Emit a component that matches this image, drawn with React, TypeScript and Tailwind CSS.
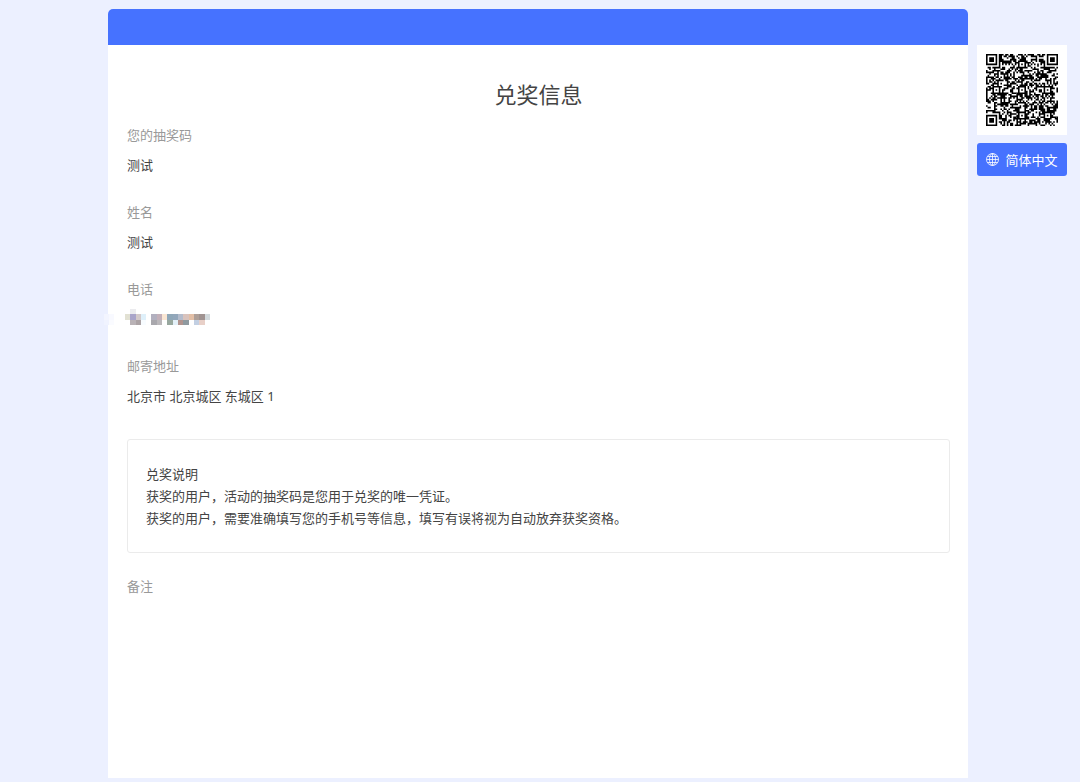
const fields = [
  { label: "您的抽奖码", value: "测试" },
  { label: "姓名", value: "测试" },
  { label: "电话", value: null },
  { label: "邮寄地址", value: "北京市 北京城区 东城区 1" },
];

// Masked phone number, one [column, row, colour] per mosaic block
const mosaic: [number, number, string][] = [
  [1, 0, "#ebebee"],
  [0, 1, "#e2e1d3"], [1, 1, "#a9a4c9"], [2, 1, "#d3c9c9"], [3, 1, "#dff0fa"],
  [1, 2, "#b9b2b6"], [2, 2, "#aba2a4"], [3, 2, "#f8fcff"],
  [5, 1, "#b2b0bf"], [6, 1, "#c3b0b9"], [7, 1, "#fae6d3"], [8, 1, "#8fa7b8"],
  [9, 1, "#93a7bb"], [10, 1, "#b4bccc"], [11, 1, "#d9c3bd"], [12, 1, "#e3bfa6"],
  [13, 1, "#ae9f98"], [14, 1, "#a09391"], [15, 1, "#d2d9dc"],
  [5, 2, "#a9a8ad"], [6, 2, "#bbb8bb"], [8, 2, "#98a89f"], [9, 2, "#e3f0f8"],
  [10, 2, "#b1948f"], [11, 2, "#8f9aa0"], [13, 2, "#c2cfe2"], [14, 2, "#e8d0c8"],
  [-4, 1, "#f3f5ff"], [-3, 1, "#f8f9ff"], [-4, 2, "#f0f3ff"], [-3, 2, "#fafbff"],
];

const QR_SIZE = 45;
const ALIGN = [6, 22, 38];

const ring = (dx: number, dy: number) => Math.max(Math.abs(dx), Math.abs(dy));

const isDark = (x: number, y: number) => {
  const finders = [[3, 3], [QR_SIZE - 4, 3], [3, QR_SIZE - 4]];
  for (const [cx, cy] of finders) {
    const d = ring(x - cx, y - cy);
    if (d <= 4) return d === 3 || d <= 1;
  }
  for (const cx of ALIGN) {
    for (const cy of ALIGN) {
      const d = ring(x - cx, y - cy);
      if (d <= 2) return d !== 1;
    }
  }
  if (x === 6 || y === 6) return (x + y) % 2 === 0;
  let h = Math.imul(x + 11, 374761393) ^ Math.imul(y + 7, 668265263);
  h = Math.imul(h ^ (h >>> 13), 1274126177);
  return ((h ^ (h >>> 16)) & 255) < 134;
};

const qrPath = Array.from({ length: QR_SIZE * QR_SIZE }, (_, i) => [i % QR_SIZE, Math.floor(i / QR_SIZE)])
  .filter(([x, y]) => isDark(x, y))
  .map(([x, y]) => `M${x} ${y}h1v1h-1z`)
  .join("");

const QrCode = () => (
  <svg viewBox="0 0 45 45" className="w-full" role="img" aria-label="二维码">
    <path d={qrPath} fill="#000" />
  </svg>
);

const GlobeIcon = () => (
  <svg viewBox="0 0 26 26" className="h-[13px] w-[13px] shrink-0" fill="none" stroke="currentColor" strokeWidth="1.6" aria-hidden="true">
    <circle cx="13" cy="13" r="12" />
    <ellipse cx="13" cy="13" rx="6" ry="12" />
    <path d="M13 1v24M1 13h24M3 7h20M3 19h20" />
  </svg>
);

const MaskedPhone = () => (
  <svg viewBox="0.4 -0.2 16 3" className="h-4 w-[85px] overflow-visible" shapeRendering="crispEdges" aria-hidden="true">
    {mosaic.map(([x, y, fill]) => (
      <rect key={`${x},${y}`} x={x} y={y} width="1" height="1" fill={fill} />
    ))}
  </svg>
);

const App = () => {
  return (
    <div className="grid min-h-screen grid-cols-[10%_minmax(0,1fr)_112px] bg-[#ecf0ff] pt-[9px] pb-1 font-['Noto_Sans','Noto_Sans_CJK_SC',sans-serif] text-[13px] leading-[22px] text-[#444]">
      <main className="col-start-2 flex flex-col bg-white rounded-t-[5px]">
        <div className="h-9 rounded-t-[5px] bg-[#4672ff]" />
        <div className="pl-[19px] pr-[18px] pt-[33px] pb-8">
          <h1 className="mb-[14px] text-center text-[22px] leading-8">兑奖信息</h1>

          <dl>
            {fields.map((field) => (
              <div key={field.label} className="mb-[25px]">
                <dt className="mb-2 text-[#999]">{field.label}</dt>
                <dd className="flex h-[22px]">{field.value ?? <MaskedPhone />}</dd>
              </div>
            ))}
          </dl>

          <section className="mt-8 mb-[22px] rounded-[3px] border border-[#ebebeb] px-[18px] py-[23px]">
            <p>兑奖说明</p>
            <p>获奖的用户，活动的抽奖码是您用于兑奖的唯一凭证。</p>
            <p>获奖的用户，需要准确填写您的手机号等信息，填写有误将视为自动放弃获奖资格。</p>
          </section>

          <p className="text-[#999]">备注</p>
        </div>
      </main>

      <aside className="flex w-[99px] flex-col gap-2 pt-9 pl-[9px]">
        <div className="bg-white p-[9px]">
          <QrCode />
        </div>
        <button type="button" className="flex h-[33px] items-center justify-center gap-1.5 rounded-[3px] bg-[#4672ff] text-white">
          <GlobeIcon />
          简体中文
        </button>
      </aside>
    </div>
  );
};

export default App;
